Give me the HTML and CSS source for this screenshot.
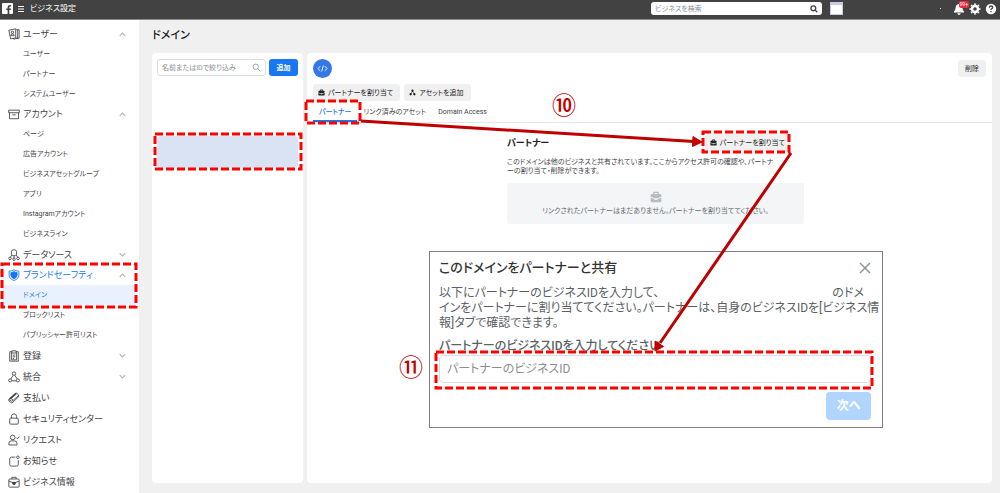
FILE: index.html
```html
<!DOCTYPE html>
<html lang="ja">
<head>
<meta charset="utf-8">
<title>ビジネス設定</title>
<link rel="stylesheet" href="styles.css">
</head>
<body>
<svg class="defs" aria-hidden="true">
  <symbol id="up" viewBox="0 0 8 8"><path d="M1.500 5.200 4 2.800l2.500 2.400" fill="none" stroke="currentColor"/></symbol>
  <symbol id="down" viewBox="0 0 8 8"><path d="M1.500 2.800 4 5.200l2.500-2.400" fill="none" stroke="currentColor"/></symbol>
  <symbol id="bag" viewBox="0 0 12 12"><path d="M3.200 3V2q0-1.200 1.200-1.200h3.200Q8.800.8 8.800 2v1h1.400q1.200 0 1.200 1.200v1.600L7.500 7.200h-3L.6 5.800V4.200Q.6 3 1.800 3zm1.300 0h3V2h-3zM.6 6.800l3.700 1.300.7 1h2l.7-1 3.700-1.300V10q0 1.200-1.200 1.200H1.800Q.6 11.200.6 10z" fill="currentColor"/></symbol>
  <symbol id="lens" viewBox="0 0 12 12"><circle cx="5" cy="5" r="3.600" fill="none" stroke="currentColor"/><path d="m7.700 7.700 3.300 3.300" stroke="currentColor"/></symbol>
</svg>

<header class="topbar">
  <svg class="logo" viewBox="0 0 11 11"><rect width="11" height="11" rx="1" fill="#fff"/><path d="M5.600 11V7H4.300V5.400h1.300V4.200Q5.600 2 7.800 2h1.300v1.600h-.9q-.9 0-.9.900v.9h1.700L8.800 7H7.300v4z" fill="#424242"/></svg>
  <button class="menu" aria-label="メニュー"><svg viewBox="0 0 8 8"><path d="M1 1.500h6M1 4h6M1 6.500h6" stroke="#fff"/></svg></button>
  <span class="brand">ビジネス設定</span>
  <div class="top-right">
    <label class="top-search">
      <input type="search" placeholder="ビジネスを検索" aria-label="ビジネスを検索">
      <svg viewBox="0 0 12 12"><use href="#lens"/></svg>
    </label>
    <span class="avatar"></span>
    <span class="dot"></span>
    <button class="bell" aria-label="お知らせ"><svg viewBox="0 0 12 12"><path d="M6 1q3 0 3.300 3.500Q9.500 7 11 8.600v.9H1v-.9Q2.500 7 2.700 4.500 3 1 6 1zM4.300 10.200h3.400Q7.300 12 6 12t-1.700-1.800z" fill="#fff"/></svg><span class="badge">99+</span></button>
    <button aria-label="設定"><svg viewBox="0 0 12 12"><circle cx="6" cy="6" r="3" fill="none" stroke="#fff" stroke-width="2.400"/><path d="M6 1.800V.6M6 10.200v1.200M1.800 6H.6M10.200 6h1.200M3 3l-.9-.9M9 9l.9.900M3 9l-.9.900M9 3l.9-.9" stroke="#fff" stroke-width="2.200"/></svg></button>
    <button aria-label="ヘルプ"><svg viewBox="0 0 12 12"><circle cx="6" cy="6" r="5.200" fill="#fff"/><path d="M4.300 4.700Q4.400 3 6 3t1.700 1.400Q7.700 5.300 6 6.200V7M6 8v1.300" fill="none" stroke="#424242" stroke-width="1.300"/></svg></button>
  </div>
</header>

<div class="shell">
  <nav class="sidebar">
    <a href="#" class="top open"><svg viewBox="0 0 14 14"><path d="M1 2.500 9 1v10.500l-6 1.200zM9.500 2h3.500v10H9M11.300 2v10M5.500 12.200l1.800.8 4-1.500" /><circle cx="5.200" cy="5" r="1.400"/><path d="M3.200 9q0-2 2-2t2 1.800z"/></svg><span>ユーザー</span><svg class="chev" viewBox="0 0 8 8"><use href="#up"/></svg></a>
    <a href="#" class="sub">ユーザー</a>
    <a href="#" class="sub">パートナー</a>
    <a href="#" class="sub">システムユーザー</a>
    <a href="#" class="top open"><svg viewBox="0 0 14 14"><path d="M.8 2.500h12.400v3H.8zM1.700 5.500v7h10.600v-7M5 8h4"/></svg><span>アカウント</span><svg class="chev" viewBox="0 0 8 8"><use href="#up"/></svg></a>
    <a href="#" class="sub">ページ</a>
    <a href="#" class="sub">広告アカウント</a>
    <a href="#" class="sub">ビジネスアセットグループ</a>
    <a href="#" class="sub">アプリ</a>
    <a href="#" class="sub">Instagramアカウント</a>
    <a href="#" class="sub">ビジネスライン</a>
    <a href="#" class="top"><svg viewBox="0 0 14 14"><path d="M4 6.500V3q0-2.200 3-2.200T10 3v3.500Q8.500 8 7 8T4 6.500zM7 8v2.500M4.500 7 2.800 9.500M9.500 7l1.700 2.500"/><circle cx="2.300" cy="11" r="1.500"/><circle cx="7" cy="12" r="1.400"/><circle cx="11.700" cy="11" r="1.500"/></svg><span>データソース</span><svg class="chev" viewBox="0 0 8 8"><use href="#down"/></svg></a>
    <a href="#" class="top open active"><svg viewBox="0 0 14 14"><path d="M7 .8q2.500 1.700 5.700 1.700V7q0 4.500-5.700 6.400Q1.300 11.500 1.300 7V2.500Q4.500 2.500 7 .8z"/><path d="M7 3q1.600 1 3.700 1.200V7q0 3-3.700 4.400Q3.300 10 3.300 7V4.200Q5.400 4 7 3z" fill="currentColor"/></svg><span>ブランドセーフティ</span><svg class="chev" viewBox="0 0 8 8"><use href="#up"/></svg></a>
    <a href="#" class="sub current">ドメイン</a>
    <a href="#" class="sub">ブロックリスト</a>
    <a href="#" class="sub">パブリッシャー許可リスト</a>
    <a href="#" class="top"><svg viewBox="0 0 14 14"><path d="M4.500 2H2v11h10V2H9.500M4.500 1h5v2.500h-5zM4 3v8.500h6V3M5.500 6h3M5.500 8h3M5.500 10h1.500"/></svg><span>登録</span><svg class="chev" viewBox="0 0 8 8"><use href="#down"/></svg></a>
    <a href="#" class="top"><svg viewBox="0 0 14 14"><circle cx="7" cy="3" r="2"/><circle cx="2.500" cy="11" r="1.800"/><circle cx="11.500" cy="11" r="1.800"/><path d="M6 5 3.300 9.300M8 5l2.700 4.300M4.500 11.500h5"/></svg><span>統合</span><svg class="chev" viewBox="0 0 8 8"><use href="#down"/></svg></a>
    <a href="#" class="top"><svg viewBox="0 0 14 14"><path d="M1 8.500 9.500 1l3 2.500v2L4.500 13 1 10.500zM1 8.500 4.500 11l8-7"/><path d="m3 7.300 3.300 2.500"/><path d="m2.200 8 7.500-6.300" stroke-width="2"/></svg><span>支払い</span></a>
    <a href="#" class="top"><svg viewBox="0 0 14 14"><rect x="2" y="6" width="10" height="7" rx="1.200"/><path d="M4 6V4q0-3 3-3t3 3v2"/></svg><span>セキュリティセンター</span></a>
    <a href="#" class="top"><svg viewBox="0 0 14 14"><circle cx="5.500" cy="4" r="2.700"/><path d="M1 12.800V11q0-3 3-3h3.500q3 0 3 3v1.800zM9.500 4.200l1.300 1.300L13.500 3"/></svg><span>リクエスト</span></a>
    <a href="#" class="top"><svg viewBox="0 0 14 14"><path d="M8.500 2.500H4Q2 2.500 2 4.500V11q0 2 2 2h6q2 0 2-2V6"/><circle cx="11.500" cy="2.700" r="1.500"/></svg><span>お知らせ</span></a>
    <a href="#" class="top"><svg viewBox="0 0 14 14"><path d="M2 3.500h10q1 0 1 1V12q0 1-1 1H2q-1 0-1-1V4.500q0-1 1-1zM4.500 3.500v-2h5v2M1 6l4 1.500h4L13 6"/><path d="M5 7.500h4L8 10H6z" fill="currentColor"/></svg><span>ビジネス情報</span></a>
  </nav>

  <main class="main">
    <h1>ドメイン</h1>
    <div class="cards">
      <section class="card list">
        <div class="filter">
          <label class="field"><input type="search" placeholder="名前またはIDで絞り込み" aria-label="名前またはIDで絞り込み"><svg viewBox="0 0 12 12"><use href="#lens"/></svg></label>
          <button class="primary">追加</button>
        </div>
        <button class="item" aria-label="選択中のドメイン"></button>
      </section>

      <section class="card detail">
        <div class="detail-head">
          <span class="code"><svg viewBox="0 0 12 12"><path d="M3.500 3.500 1 6l2.500 2.500M8.500 3.500 11 6 8.500 8.500M7 2.800 5 9.200" fill="none" stroke="#fff"/></svg></span>
          <button class="btn">削除</button>
        </div>
        <div class="actions">
          <button class="btn"><svg viewBox="0 0 12 12"><use href="#bag"/></svg>パートナーを割り当て</button>
          <button class="btn"><svg viewBox="0 0 12 12"><circle cx="6" cy="3" r="2" fill="#222"/><circle cx="2.800" cy="9" r="2" fill="#222"/><circle cx="9.200" cy="9" r="2" fill="#222"/><path d="M5.500 4 3.500 8M6.500 4l2 4" stroke="#222"/></svg>アセットを追加</button>
        </div>
        <div class="tabs" role="tablist">
          <button role="tab" class="tab on" aria-selected="true">パートナー</button>
          <button role="tab" class="tab">リンク済みのアセット</button>
          <button role="tab" class="tab">Domain Access</button>
        </div>
        <div class="panel">
          <div class="panel-head"><h2>パートナー</h2><button class="btn"><svg viewBox="0 0 12 12"><use href="#bag"/></svg>パートナーを割り当て</button></div>
          <p>このドメインは他のビジネスと共有されています。ここからアクセス許可の確認や、パートナ<br>ーの割り当て・削除ができます。</p>
          <div class="empty"><svg viewBox="0 0 12 12"><use href="#bag"/></svg><span>リンクされたパートナーはまだありません。パートナーを割り当ててください。</span></div>
        </div>
      </section>
    </div>
  </main>
</div>

<form class="dialog" role="dialog" aria-labelledby="dlg">
  <div class="dialog-head"><h2 id="dlg">このドメインをパートナーと共有</h2><button type="button" class="close" aria-label="閉じる"><svg viewBox="0 0 12 12"><path d="m1 1 10 10M11 1 1 11" stroke="currentColor" stroke-width="1.500"/></svg></button></div>
  <p>以下にパートナーのビジネスIDを入力して、<span class="blank"></span>のドメ<br>インをパートナーに割り当ててください。パートナーは、自身のビジネスIDを[ビジネス情<br>報]タブで確認できます。</p>
  <label for="bid">パートナーのビジネスIDを入力してください</label>
  <input id="bid" type="text" placeholder="パートナーのビジネスID">
  <button type="button" class="next">次へ</button>
</form>

<svg class="marks" viewBox="0 0 1000 493" aria-hidden="true">
  <g class="dash">
    <rect x="2" y="264" width="134" height="43"/>
    <rect x="155" y="134" width="146" height="35"/>
    <rect x="306" y="101" width="54" height="22"/>
    <rect x="703" y="132" width="86" height="20"/>
    <rect x="436" y="352" width="436" height="36"/>
  </g>
  <g class="arrow">
    <path d="M361 121 694 141.500M791 153 660 343"/>
    <path class="tip" d="M702 142 692.500 146.500 693 136.500zM655 351 655 341 663.500 346.500z"/>
  </g>
</svg>
<span class="step step-a">⑩</span>
<span class="step step-b">⑪</span>
</body>
</html>
```

FILE: styles.css
```css
* { box-sizing: border-box; }
body {
  margin: 0;
  min-height: 100vh;
  display: flex;
  flex-direction: column;
  position: relative;
  background: #f0f0f0;
  color: #3f4247;
  font-family: Roboto, "Noto Sans CJK JP", sans-serif;
  font-size: 7px;
  line-height: 10px;
  font-feature-settings: "palt";
}
button, input { font: inherit; font-feature-settings: inherit; color: inherit; border: 0; padding: 0; background: none; min-width: 0; }
input { outline: 0; appearance: none; }
h1, h2, p { margin: 0; }
a { color: inherit; text-decoration: none; }
svg { display: block; flex: none; }
.defs { position: absolute; width: 0; height: 0; }

.topbar {
  height: 20px;
  display: flex;
  align-items: center;
  padding: 0 3px 2px 2px;
  background: #424242;
  border-bottom: 1px solid #8a8a8a;
  color: #fff;
}
.logo { width: 11px; height: 11px; }
.menu { margin: 0 5px 0 4px; }
.menu svg { width: 8px; height: 8px; }
.brand { font-size: 8px; }
.top-right { margin-left: auto; display: flex; align-items: center; gap: 4px; }
.top-right button { position: relative; }
.top-right button svg { width: 12px; height: 12px; }
.top-search {
  width: 171px;
  height: 13px;
  display: flex;
  align-items: center;
  padding: 0 4px;
  border-radius: 3px;
  background: #fff;
  color: #444;
}
.top-search input { flex: 1; }
.top-search svg { width: 8px; height: 8px; stroke-width: 2; }
input::placeholder { color: #8b8f94; opacity: 1; }
.avatar { width: 13px; height: 13px; margin-left: 4px; background: #fff; border: 1px solid #c5cce4; border-top-width: 3px; }
.dot { width: 1px; height: 1px; margin: 0 8px 0 93px; background: #ddd; }
.badge {
  position: absolute;
  top: -2px;
  right: -4px;
  padding: 0 1px;
  border-radius: 2px;
  background: #f0283a;
  color: #fff;
  font-size: 5px;
  line-height: 7px;
}

.shell { flex: 1; display: flex; }
.sidebar { width: 139px; flex: none; padding-top: 4px; background: #fff; }
.top { height: 21px; display: flex; align-items: center; gap: 3px; padding: 0 12px 0 8px; font-size: 9px; }
.top.open { height: 20px; }
.top svg { width: 12px; height: 12px; fill: none; stroke: currentColor; }
.top .chev { width: 9px; height: 9px; margin-left: auto; color: #b0b3b8; }
.active { color: #1877f2; }
.sub { display: flex; align-items: center; height: 20px; margin: 0 4px 0 3px; padding-left: 20px; }
.current { background: #e9f1fe; color: #1877f2; }

.main { flex: 1; min-width: 0; display: flex; flex-direction: column; padding: 9px 8px 10px 13px; }
h1 { padding-bottom: 10px; font-size: 11px; line-height: 14px; font-weight: 500; color: #1c1e21; }
.cards { flex: 1; display: flex; gap: 4px; }
.card { background: #fff; border-radius: 4px; }
.list { width: 151px; flex: none; padding: 6px 5px; }
.filter { display: flex; gap: 3px; }
.field { flex: 1; min-width: 0; height: 17px; display: flex; align-items: center; padding: 0 4px; border: 1px solid #dadde1; border-radius: 3px; color: #888; }
.field input { flex: 1; }
.field svg { width: 9px; height: 9px; }
.primary { width: 29px; border-radius: 3px; background: #1877f2; color: #fff; font-weight: 700; }
.item { display: block; width: 100%; height: 32px; margin-top: 60px; border-radius: 4px; background: #dae3f3; }

.detail { flex: 1; min-width: 0; padding-top: 6px; }
.detail-head { display: flex; justify-content: space-between; align-items: center; padding: 0 6px; }
.code { width: 19px; height: 19px; display: grid; place-items: center; border-radius: 50%; background: #3578e5; }
.code svg { width: 11px; height: 11px; }
.btn { height: 17px; display: flex; align-items: center; gap: 3px; padding: 0 7px; border-radius: 3px; background: #f0f0f0; color: #222; white-space: nowrap; }
.btn svg { width: 7px; height: 7px; }
.actions { display: flex; gap: 4px; padding: 6px 6px 0; }
.actions .btn { padding: 0 7px 0 5px; }
.tabs { display: flex; padding: 2px 6px 0; border-bottom: 1px solid #e4e6e8; }
.tab { height: 19px; padding: 0 6px; border-bottom: 2px solid transparent; white-space: nowrap; }
.on { color: #1877f2; border-color: #1877f2; font-weight: 500; }
.panel { width: 297px; margin: 11px auto 0; position: relative; left: 6px; }
.panel-head { display: flex; justify-content: space-between; align-items: center; padding-right: 14px; }
.panel-head .btn { padding: 0 5px; }
.panel h2 { font-size: 9px; font-weight: 700; color: #1c1e21; }
.panel p { padding: 7px 0; line-height: 9px; }
.empty { display: flex; flex-direction: column; align-items: center; gap: 3px; padding: 8px 0; border-radius: 3px; background: #f3f5f6; color: #666a70; }
.empty svg { width: 12px; height: 12px; color: #b8bcc2; }

.dialog {
  position: absolute;
  left: 429px;
  top: 251px;
  width: 454px;
  display: flex;
  flex-direction: column;
  padding: 8px 11px 7px 9px;
  border: 1px solid #7f7f7f;
  background: #fff;
  color: #5b5f66;
  font-size: 12px;
}
.dialog-head { display: flex; justify-content: space-between; align-items: center; padding-bottom: 10px; }
.dialog h2 { font-size: 13px; line-height: 16px; font-weight: 500; color: #333; }
.close { color: #8d949e; }
.close svg { width: 12px; height: 12px; }
.dialog p { line-height: 15px; white-space: nowrap; }
.blank { display: inline-block; width: 173px; }
.dialog label { padding: 8px 0 2px; line-height: 14px; font-weight: 500; }
.dialog input { height: 28px; padding: 0 7px; border: 1px solid #dadde1; border-radius: 4px; }
.next { align-self: flex-end; width: 45px; height: 28px; margin-top: 9px; border-radius: 4px; background: #b0d5ff; color: #fff; font-weight: 700; }

.marks { position: absolute; left: 0; top: 0; width: 1000px; height: 493px; pointer-events: none; }
.dash { fill: none; stroke: #f00; stroke-width: 3; stroke-dasharray: 8 3; }
.arrow { fill: none; stroke: #c00000; stroke-width: 3; }
.tip { fill: #c00000; stroke-width: 1; }
.step { position: absolute; font-family: "Noto Sans CJK JP", sans-serif; font-size: 24px; line-height: 24px; font-weight: 500; color: #c00000; }
.step-a { left: 552px; top: 92px; }
.step-b { left: 399px; top: 354px; }
```
